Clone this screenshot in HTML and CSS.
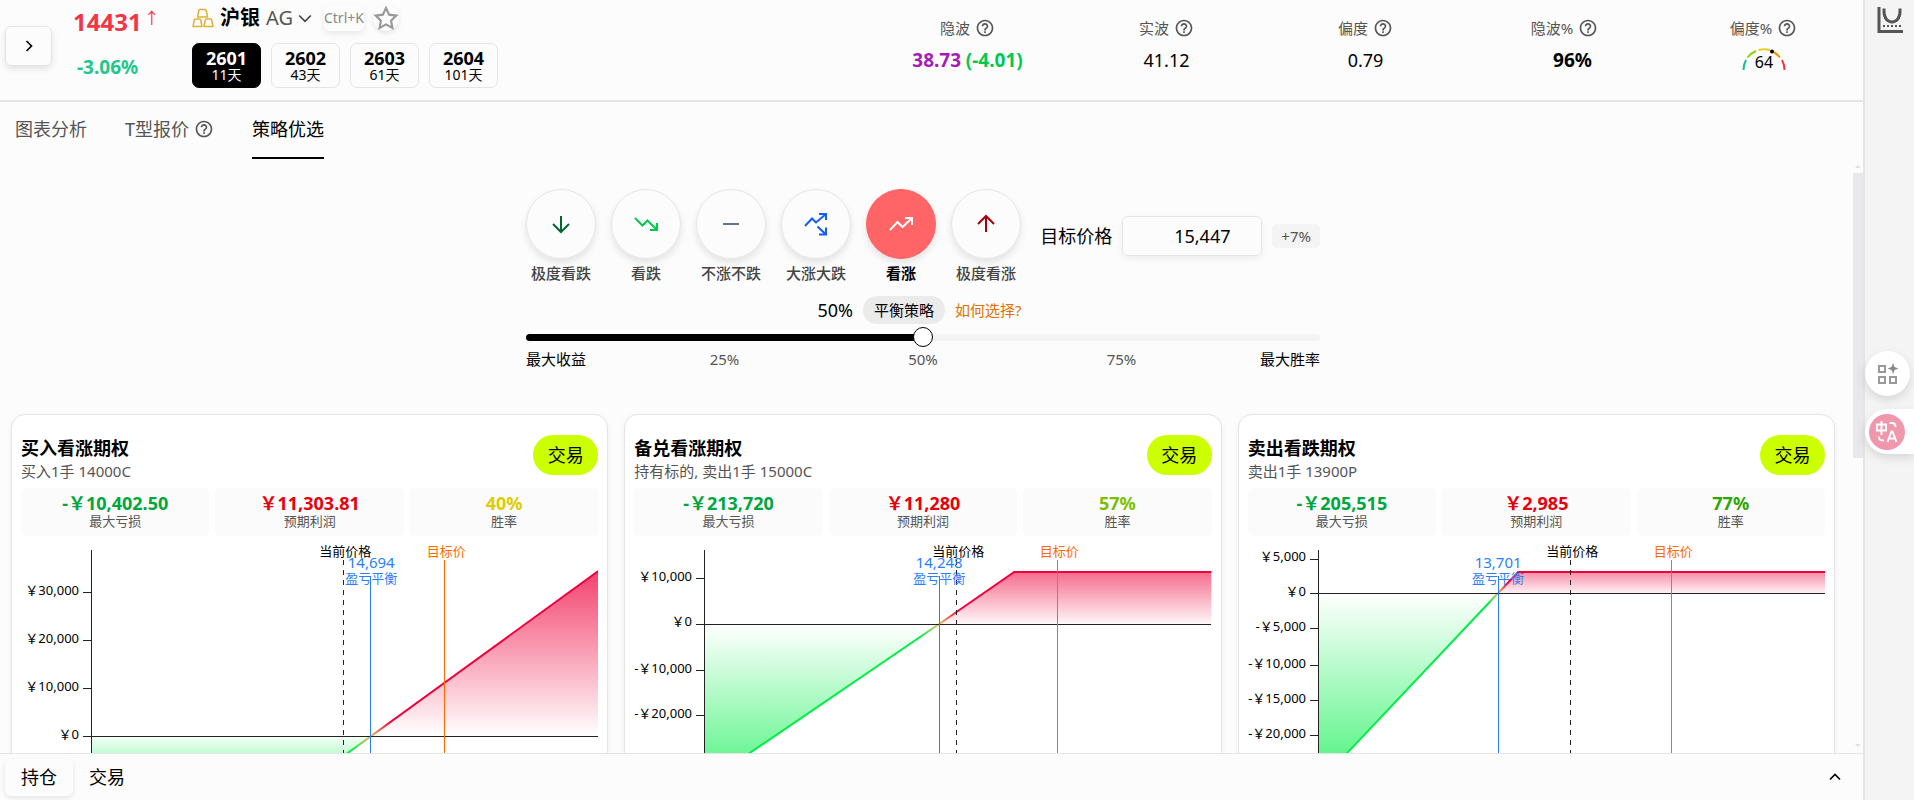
FILE: index.html
```html
<!DOCTYPE html>
<html lang="zh-CN">

<head>
    <meta charset="UTF-8">
    <title>沪银 AG - 策略优选</title>
    <link rel="stylesheet" href="styles.css">
</head>

<body>
    <svg width="0" height="0" class="defs">
        <defs>
            <symbol id="help" viewBox="0 0 24 24">
                <path fill="currentColor" d="M11 18h2v-2h-2v2zm1-16C6.480 2 2 6.480 2 12s4.480 10 10 10 10-4.480 10-10S17.520 2 12 2zm0 18c-4.410 0-8-3.590-8-8s3.590-8 8-8 8 3.590 8 8-3.590 8-8 8zm0-14c-2.210 0-4 1.790-4 4h2c0-1.100.9-2 2-2s2 .9 2 2c0 2-3 1.750-3 5h2c0-2.250 3-2.500 3-5 0-2.210-1.790-4-4-4z" />
            </symbol>
        </defs>
    </svg>

    <main class="main">
        <header class="header">
            <button class="expand" type="button" aria-label="展开">
                <svg width="20" height="20" viewBox="0 0 24 24" class="line"><path d="M9 6l6 6-6 6" /></svg>
            </button>
            <div class="quote">
                <div class="price">14431<span class="arrow">↑</span></div>
                <div class="change">-3.06%</div>
            </div>
            <div class="symbol">
                <div class="symbol-row">
                    <svg class="gold" width="22" height="20" viewBox="0 0 22 20">
                        <path d="M8 1.500q-1 0-1.200 1l-1.300 6.500h10l-1.300-6.500q-.2-1-1.200-1zM3.500 11q-1 0-1.200 1l-1.300 6.500h9l-1.300-6.500q-.2-1-1.200-1zM14.500 11q-1 0-1.200 1l-1.300 6.500h9l-1.300-6.500q-.2-1-1.200-1z" />
                    </svg>
                    <strong>沪银</strong>
                    <span class="code">AG</span>
                    <svg class="line chevron" width="20" height="20" viewBox="0 0 24 24"><path d="M5 9l7 7 7-7" /></svg>
                    <kbd>Ctrl+K</kbd>
                    <button class="star" type="button" aria-label="收藏">
                        <svg width="26" height="26" viewBox="0 0 24 24"><path d="M12 2.800l2.900 6.100 6.600.9-4.800 4.600 1.200 6.700-5.900-3.200-5.900 3.200 1.200-6.700-4.800-4.600 6.600-.9z" /></svg>
                    </button>
                </div>
                <div class="months">
                    <button class="month active" type="button"><b>2601</b><small>11天</small></button>
                    <button class="month" type="button"><b>2602</b><small>43天</small></button>
                    <button class="month" type="button"><b>2603</b><small>61天</small></button>
                    <button class="month" type="button"><b>2604</b><small>101天</small></button>
                </div>
            </div>
            <div class="metrics">
                <div class="metric">
                    <div class="metric-label">隐波 <svg class="help"><use href="#help" /></svg></div>
                    <div class="metric-value"><b class="purple">38.73</b> <b class="green">(-4.01)</b></div>
                </div>
                <div class="metric">
                    <div class="metric-label">实波 <svg class="help"><use href="#help" /></svg></div>
                    <div class="metric-value">41.12</div>
                </div>
                <div class="metric">
                    <div class="metric-label">偏度 <svg class="help"><use href="#help" /></svg></div>
                    <div class="metric-value">0.79</div>
                </div>
                <div class="metric">
                    <div class="metric-label">隐波% <svg class="help"><use href="#help" /></svg></div>
                    <div class="metric-value rank"><b>96%</b></div>
                </div>
                <div class="metric">
                    <div class="metric-label">偏度% <svg class="help"><use href="#help" /></svg></div>
                    <svg class="gauge" width="46" height="28" viewBox="0 0 46 28">
                        <path stroke="#12c48b" d="M2.500 23A21 21 0 0 1 5 13" />
                        <path stroke="#8fd400" d="M6.500 10.500A21 21 0 0 1 15 4" />
                        <path stroke="#f2cb1d" d="M17.500 3A21 21 0 0 1 29 3.200" />
                        <path stroke="#f39200" d="M32.500 5A21 21 0 0 1 39 10.500" />
                        <path stroke="#f23645" d="M41 13A21 21 0 0 1 43.500 23" />
                        <circle cx="31" cy="4.500" r="2" />
                        <text x="23" y="21">64</text>
                    </svg>
                </div>
            </div>
        </header>

        <nav class="tabs">
            <a href="#">图表分析</a>
            <a href="#">T型报价 <svg class="help"><use href="#help" /></svg></a>
            <a href="#" class="active">策略优选</a>
        </nav>

        <div class="scroll">
            <div class="content">
                <section class="picker">
                    <div class="outlook">
                        <button class="view" type="button">
                            <span class="circle c-down2"><svg class="line" width="24" height="24" viewBox="0 0 24 24"><path d="M12 4v16M4 12l8 8 8-8" /></svg></span>
                            极度看跌
                        </button>
                        <button class="view" type="button">
                            <span class="circle c-down"><svg class="line" width="24" height="24" viewBox="0 0 24 24"><path d="M1 6l7.500 7.500 5-5L23 18M16 18h7v-7" /></svg></span>
                            看跌
                        </button>
                        <button class="view" type="button">
                            <span class="circle c-flat"><svg class="line" width="24" height="24" viewBox="0 0 24 24"><path d="M4 12h16" /></svg></span>
                            不涨不跌
                        </button>
                        <button class="view" type="button">
                            <span class="circle c-both"><svg class="line" width="24" height="24" viewBox="0 0 24 24"><path d="M1 14l7-7.500 4 4L22 2M15 2h7v6M13.500 14.500l8.500 8M15 22.500h7v-7" /></svg></span>
                            大涨大跌
                        </button>
                        <button class="view active" type="button">
                            <span class="circle"><svg class="line" width="24" height="24" viewBox="0 0 24 24"><path d="M1 18l7.500-8 5 5L23 6M16 6h7v7" /></svg></span>
                            看涨
                        </button>
                        <button class="view" type="button">
                            <span class="circle c-up2"><svg class="line" width="24" height="24" viewBox="0 0 24 24"><path d="M12 20V4M4 12l8-8 8 8" /></svg></span>
                            极度看涨
                        </button>
                        <div class="target">
                            <label for="target">目标价格</label>
                            <input id="target" type="text" value="15,447">
                            <span class="badge">+7%</span>
                        </div>
                    </div>

                    <div class="balance">
                        <span class="balance-value">50%</span>
                        <span class="pill">平衡策略</span>
                        <a href="#">如何选择?</a>
                    </div>
                    <input class="slider" type="range" min="0" max="100" value="50" aria-label="平衡策略">
                    <div class="marks">
                        <span class="end">最大收益</span>
                        <span>25%</span>
                        <span>50%</span>
                        <span>75%</span>
                        <span class="end">最大胜率</span>
                    </div>
                </section>

                <section class="cards">
                    <article class="card">
                        <div class="card-head">
                            <div>
                                <h2>买入看涨期权</h2>
                                <p>买入1手 14000C</p>
                            </div>
                            <button class="trade" type="button">交易</button>
                        </div>
                        <div class="stats">
                            <div class="stat loss"><b>-&#65509;10,402.50</b><span>最大亏损</span></div>
                            <div class="stat profit"><b>&#65509;11,303.81</b><span>预期利润</span></div>
                            <div class="stat rate-40"><b>40%</b><span>胜率</span></div>
                        </div>
                        <svg class="chart" viewBox="0 0 577 300">
                            <defs>
                                <linearGradient id="line1" gradientUnits="userSpaceOnUse" x1="330" y1="0" x2="369" y2="0">
                                    <stop offset="0" stop-color="#00ee46" /><stop offset=".5" stop-color="#e6c05a" /><stop offset="1" stop-color="#f0003a" />
                                </linearGradient>
                                <linearGradient id="up1" gradientUnits="userSpaceOnUse" x1="0" y1="31" x2="0" y2="196">
                                    <stop offset="0" stop-color="#f0003a" stop-opacity=".74" /><stop offset="1" stop-color="#f0003a" stop-opacity="0" />
                                </linearGradient>
                                <linearGradient id="down1" gradientUnits="userSpaceOnUse" x1="0" y1="196" x2="0" y2="246">
                                    <stop offset="0" stop-color="#00ee46" stop-opacity=".04" /><stop offset="1" stop-color="#00ee46" stop-opacity=".6" />
                                </linearGradient>
                            </defs>
                            <path fill="url(#up1)" d="M350 196L577 31V196z" />
                            <path fill="url(#down1)" d="M70 196H350L281 246H70z" />
                            <path class="payoff" stroke="url(#line1)" d="M70 246H281L577 31" />
                            <path class="axis" d="M70.500 10V300M62 52.500h8M62 100.500h8M62 148.500h8M62 196.500H577" />
                            <g class="ticks">
                                <text x="58" y="55">&#65509;30,000</text>
                                <text x="58" y="103">&#65509;20,000</text>
                                <text x="58" y="151">&#65509;10,000</text>
                                <text x="58" y="199">&#65509;0</text>
                            </g>
                            <path class="now" d="M322.500 20V300" />
                            <path class="even" d="M349.500 36V300" />
                            <path class="goal" d="M423.500 20V300" />
                            <g class="labels">
                                <text x="324" y="16">当前价格</text>
                                <text class="goal-text" x="425" y="16">目标价</text>
                                <text class="even-text even-number" x="350" y="28">14,694</text>
                                <text class="even-text" x="350" y="43">盈亏平衡</text>
                            </g>
                        </svg>
                    </article>

                    <article class="card">
                        <div class="card-head">
                            <div>
                                <h2>备兑看涨期权</h2>
                                <p>持有标的, 卖出1手 15000C</p>
                            </div>
                            <button class="trade" type="button">交易</button>
                        </div>
                        <div class="stats">
                            <div class="stat loss"><b>-&#65509;213,720</b><span>最大亏损</span></div>
                            <div class="stat profit"><b>&#65509;11,280</b><span>预期利润</span></div>
                            <div class="stat rate-57"><b>57%</b><span>胜率</span></div>
                        </div>
                        <svg class="chart" viewBox="0 0 577 300">
                            <defs>
                                <linearGradient id="line2" gradientUnits="userSpaceOnUse" x1="286" y1="0" x2="324" y2="0">
                                    <stop offset="0" stop-color="#00ee46" /><stop offset=".5" stop-color="#e6c05a" /><stop offset="1" stop-color="#f0003a" />
                                </linearGradient>
                                <linearGradient id="up2" gradientUnits="userSpaceOnUse" x1="0" y1="32" x2="0" y2="84">
                                    <stop offset="0" stop-color="#f0003a" stop-opacity=".58" /><stop offset="1" stop-color="#f0003a" stop-opacity=".03" />
                                </linearGradient>
                                <linearGradient id="down2" gradientUnits="userSpaceOnUse" x1="0" y1="84" x2="0" y2="212">
                                    <stop offset="0" stop-color="#00ee46" stop-opacity="0" /><stop offset="1" stop-color="#00ee46" stop-opacity=".56" />
                                </linearGradient>
                            </defs>
                            <path fill="url(#up2)" d="M305 84L380 32H577V84z" />
                            <path fill="url(#down2)" d="M70 84H305L117 212L70 244z" />
                            <path class="payoff" stroke="url(#line2)" d="M70 244L117 212L305 84L380 32H577" />
                            <path class="axis" d="M70.500 10V300M62 38.500h8M62 84.500H577M62 130.500h8M62 175.500h8" />
                            <g class="ticks">
                                <text x="58" y="41">&#65509;10,000</text>
                                <text x="58" y="86">&#65509;0</text>
                                <text x="58" y="133">-&#65509;10,000</text>
                                <text x="58" y="178">-&#65509;20,000</text>
                            </g>
                            <path class="now" d="M322.500 20V300" />
                            <path class="even" d="M305.500 36V300" />
                            <path class="goal" d="M423.500 20V300" />
                            <g class="labels">
                                <text x="324" y="16">当前价格</text>
                                <text class="goal-text" x="425" y="16">目标价</text>
                                <text class="even-text even-number" x="305" y="28">14,248</text>
                                <text class="even-text" x="305" y="43">盈亏平衡</text>
                            </g>
                        </svg>
                    </article>

                    <article class="card">
                        <div class="card-head">
                            <div>
                                <h2>卖出看跌期权</h2>
                                <p>卖出1手 13900P</p>
                            </div>
                            <button class="trade" type="button">交易</button>
                        </div>
                        <div class="stats">
                            <div class="stat loss"><b>-&#65509;205,515</b><span>最大亏损</span></div>
                            <div class="stat profit"><b>&#65509;2,985</b><span>预期利润</span></div>
                            <div class="stat rate-77"><b>77%</b><span>胜率</span></div>
                        </div>
                        <svg class="chart" viewBox="0 0 577 300">
                            <defs>
                                <linearGradient id="line3" gradientUnits="userSpaceOnUse" x1="240" y1="0" x2="260" y2="0">
                                    <stop offset="0" stop-color="#00ee46" /><stop offset=".5" stop-color="#e6c05a" /><stop offset="1" stop-color="#f0003a" />
                                </linearGradient>
                                <linearGradient id="up3" gradientUnits="userSpaceOnUse" x1="0" y1="32" x2="0" y2="53">
                                    <stop offset="0" stop-color="#f0003a" stop-opacity=".45" /><stop offset="1" stop-color="#f0003a" stop-opacity=".05" />
                                </linearGradient>
                                <linearGradient id="down3" gradientUnits="userSpaceOnUse" x1="0" y1="53" x2="0" y2="212">
                                    <stop offset="0" stop-color="#00ee46" stop-opacity="0" /><stop offset="1" stop-color="#00ee46" stop-opacity=".6" />
                                </linearGradient>
                            </defs>
                            <path fill="url(#up3)" d="M250 53L270 32H577V53z" />
                            <path fill="url(#down3)" d="M70 53H250L100 212L70 244z" />
                            <path class="payoff" stroke="url(#line3)" d="M70 244L100 212L250 53L270 32H577" />
                            <path class="axis" d="M70.500 10V300M62 19.500h8M62 53.500H577M62 88.500h8M62 125.500h8M62 160.500h8M62 195.500h8" />
                            <g class="ticks">
                                <text x="58" y="21">&#65509;5,000</text>
                                <text x="58" y="56">&#65509;0</text>
                                <text x="58" y="91">-&#65509;5,000</text>
                                <text x="58" y="128">-&#65509;10,000</text>
                                <text x="58" y="163">-&#65509;15,000</text>
                                <text x="58" y="198">-&#65509;20,000</text>
                            </g>
                            <path class="now" d="M322.500 20V300" />
                            <path class="even" d="M250.500 36V300" />
                            <path class="goal" d="M423.500 20V300" />
                            <g class="labels">
                                <text x="324" y="16">当前价格</text>
                                <text class="goal-text" x="425" y="16">目标价</text>
                                <text class="even-text even-number" x="250" y="28">13,701</text>
                                <text class="even-text" x="250" y="43">盈亏平衡</text>
                            </g>
                        </svg>
                    </article>
                </section>
            </div>
            <div class="scrollbar">
                <svg width="6" height="3" viewBox="0 0 6 3"><path d="M0 3l3-3 3 3z" /></svg>
                <div class="thumb"></div>
                <svg width="6" height="3" viewBox="0 0 6 3"><path d="M0 0l3 3 3-3z" /></svg>
            </div>
        </div>

        <footer class="dock">
            <button class="dock-tab active" type="button">持仓</button>
            <button class="dock-tab" type="button">交易</button>
            <button class="dock-toggle" type="button" aria-label="展开">
                <svg class="line" width="20" height="20" viewBox="0 0 24 24"><path d="M6 15l6-6 6 6" /></svg>
            </button>
        </footer>
    </main>

    <aside class="side">
        <button class="side-chart" type="button" aria-label="波动率曲线">
            <svg width="26" height="28" viewBox="0 0 26 28">
                <path d="M2 0v24.500h24" />
                <path d="M7 1.500v3c0 14 16 14 16 0v-3" />
                <path stroke-dasharray="2 2" stroke-width="2" d="M6 19h18" />
            </svg>
        </button>
        <div class="floats">
            <button class="float-apps" type="button" aria-label="应用">
                <svg width="22" height="22" viewBox="0 0 22 22">
                    <path class="box" d="M2 3h6v6H2zM2 14h6v6H2zM13 14h6v6h-6z" />
                    <path class="spark" d="M16 0l1.500 4 4 1.500-4 1.500-1.500 4-1.500-4-4-1.500 4-1.500z" />
                </svg>
            </button>
            <button class="float-translate" type="button" aria-label="翻译">
                <svg width="36" height="36" viewBox="0 0 36 36">
                    <circle cx="18" cy="18" r="18" />
                    <path d="M8 10.500h9v6H8zM12.500 7v14M20.500 9h2.500q3.500 0 3.500 4M10 22.500v1q0 3 5 3M18.500 28l4-10.500h1l4 10.500M20 24.500h6" />
                </svg>
            </button>
        </div>
    </aside>
</body>

</html>
```

FILE: styles.css
```css
* {
    box-sizing: border-box;
}

body {
    display: flex;
    height: 100vh;
    margin: 0;
    overflow: hidden;
    background-color: #fcfcfc;
    color: #000;
    font-family: "Noto Sans", "Noto Sans CJK SC", sans-serif;
    font-size: 18px;
    line-height: 24px;
}

button,
input {
    padding: 0;
    border: 0;
    background: none;
    color: inherit;
    font: inherit;
}

button {
    cursor: pointer;
}

a {
    color: inherit;
    text-decoration: none;
}

.defs {
    position: absolute;
}

.line {
    fill: none;
    stroke: currentColor;
    stroke-width: 2;
}

.help {
    width: 20px;
    height: 20px;
    color: #555;
}

.main {
    display: flex;
    flex: 1;
    flex-direction: column;
    min-width: 0;
    border-right: 2px solid #e5e5e5;
}

/* header */
.header {
    display: flex;
    flex: none;
    height: 102px;
    padding-left: 5px;
    border-bottom: 2px solid #e5e5e5;
}

.expand {
    display: flex;
    align-items: center;
    justify-content: center;
    width: 47px;
    height: 40px;
    margin-top: 26px;
    border: 1px solid #e5e5e5;
    border-radius: 6px;
    box-shadow: 0 3px 6px rgba(0, 0, 0, .1);
}

.quote {
    width: 140px;
    padding: 8px 0 0 21px;
}

.price {
    color: #f23645;
    font-size: 24px;
    font-weight: bold;
    line-height: 28px;
    white-space: nowrap;
}

.arrow {
    margin-left: 2px;
    font-size: 16px;
    font-weight: normal;
    vertical-align: 7px;
    line-height: 1;
}

.change {
    margin-top: 19px;
    padding-left: 4px;
    color: #1ec88a;
    font-size: 19px;
    font-weight: bold;
}

.symbol-row {
    display: flex;
    align-items: center;
    height: 36px;
    font-size: 20px;
}

.symbol-row strong {
    margin: 0 6px;
}

.gold {
    fill: none;
    stroke: #dfb236;
    stroke-width: 1.5;
    stroke-linejoin: round;
}

.code {
    color: #555;
}

.chevron {
    margin: 0 9px 0 2px;
    color: #444;
}

kbd {
    height: 26px;
    border-radius: 6px;
    box-shadow: 0 3px 6px rgba(0, 0, 0, .08);
    color: #888;
    font-family: inherit;
    font-size: 14px;
    line-height: 26px;
}

.star {
    display: flex;
    width: 26px;
    height: 26px;
    margin-left: 9px;
    border-radius: 50%;
    box-shadow: 0 2px 5px rgba(0, 0, 0, .1);
}

.star path {
    fill: none;
    stroke: #999;
    stroke-width: 2;
}

.months {
    display: flex;
    gap: 10px;
    margin-top: 7px;
}

.month {
    display: flex;
    flex-direction: column;
    align-items: center;
    justify-content: center;
    width: 69px;
    height: 45px;
    border: 1px solid #e5e5e5;
    border-radius: 7px;
}

.month b {
    line-height: 17px;
}

.month small {
    font-size: 14px;
    line-height: 15px;
}

.month.active {
    border-color: #000;
    background-color: #000;
    color: #fff;
}

.metrics {
    display: flex;
    width: 995px;
    margin-left: auto;
}

.metric {
    display: flex;
    flex: 1;
    flex-direction: column;
    align-items: center;
    padding-top: 16px;
}

.metric-label {
    display: flex;
    align-items: center;
    gap: 5px;
    color: #555;
    font-size: 15px;
}

.metric-value {
    margin-top: 8px;
}

.metric-value b {
    font-size: 19px;
}

.rank {
    padding-left: 16px;
}

.purple {
    color: #a61bb5;
}

.green {
    color: #00c950;
}

.gauge {
    margin-top: 7px;
    fill: none;
    stroke-width: 2;
}

.gauge circle,
.gauge text {
    fill: #000;
}

.gauge text {
    font-size: 16px;
    text-anchor: middle;
}

/* tabs */
.tabs {
    display: flex;
    flex: none;
    gap: 38px;
    height: 60px;
    padding-left: 15px;
    color: #555;
}

.tabs a {
    display: flex;
    align-items: center;
    gap: 5px;
    height: 57px;
    padding-bottom: 2px;
    border-bottom: 2px solid transparent;
}

.tabs .active {
    border-color: #000;
    color: #000;
}

.scroll {
    display: flex;
    flex: 1;
    min-height: 0;
    overflow: hidden;
}

.content {
    flex: 1;
    padding: 27px 18px 0 11px;
}

.scrollbar {
    display: flex;
    flex-direction: column;
    align-items: center;
    width: 10px;
    padding: 3px 0 6px;
    fill: #e0e0e4;
}

.thumb {
    width: 100%;
    height: 49%;
    margin: 5px 0 auto;
    background-color: #e7e7ec;
}

/* picker */
.picker {
    width: 794px;
    margin: 0 auto;
}

.outlook {
    display: flex;
    gap: 15px;
}

.view {
    display: flex;
    flex-direction: column;
    align-items: center;
    gap: 2px;
    width: 70px;
    color: #444;
    font-size: 15px;
    font-weight: 500;
    white-space: nowrap;
}

.circle {
    display: flex;
    align-items: center;
    justify-content: center;
    width: 70px;
    height: 70px;
    border: 1px solid #e5e5e5;
    border-radius: 50%;
    box-shadow: 0 4px 7px rgba(0, 0, 0, .1);
}

.c-down2 {
    color: #016630;
}

.c-down {
    color: #00c950;
}

.c-flat {
    color: #62748e;
}

.c-both {
    color: #155dfc;
}

.c-up2 {
    color: #a50010;
}

.view.active {
    color: #000;
    font-weight: bold;
}

.active .circle {
    border-color: #ff6467;
    background-color: #ff6467;
    color: #fff;
}

.target {
    display: flex;
    flex: 1;
    align-items: center;
    justify-content: flex-end;
    gap: 10px;
    height: 94px;
    white-space: nowrap;
}

.target input {
    width: 140px;
    height: 40px;
    padding-left: 20px;
    border: 1px solid #e5e5e5;
    border-radius: 6px;
    box-shadow: 0 3px 6px rgba(0, 0, 0, .06);
    text-align: center;
}

.badge {
    padding: 0 9px;
    border-radius: 5px;
    background-color: #f4f4f4;
    color: #555;
    font-size: 15px;
}

.balance {
    display: flex;
    align-items: center;
    justify-content: center;
    gap: 10px;
    height: 28px;
    margin-top: 11px;
    padding-right: 7px;
    font-size: 15px;
}

.balance-value {
    font-size: 18px;
}

.pill {
    padding: 2px 11px;
    border-radius: 14px;
    background-color: #ebebeb;
}

.balance a {
    color: #e17100;
}

.slider {
    display: block;
    width: 100%;
    height: 20px;
    margin: 3px 0 0;
    appearance: none;
}

.slider::-webkit-slider-runnable-track {
    height: 7px;
    border-radius: 4px;
    background: linear-gradient(to right, #000 50%, #f4f4f4 50%);
}

.slider::-webkit-slider-thumb {
    width: 20px;
    height: 20px;
    margin-top: -7px;
    border: 1px solid #000;
    border-radius: 50%;
    background-color: #fff;
    appearance: none;
}

.marks {
    display: grid;
    grid-template-columns: 1fr 2fr 2fr 2fr 1fr;
    color: #555;
    font-size: 15px;
    text-align: center;
}

.marks .end {
    color: #000;
    text-align: left;
}

.marks .end:last-child {
    text-align: right;
}

/* cards */
.cards {
    display: grid;
    grid-template-columns: repeat(3, 1fr);
    gap: 16px;
    margin-top: 43px;
}

.card {
    padding: 20px 9px 9px;
    border: 1px solid #e5e5e5;
    border-radius: 14px;
    background-color: #fff;
    box-shadow: 0 1px 5px rgba(0, 0, 0, .06);
}

.card-head {
    display: flex;
    justify-content: space-between;
}

.card h2,
.card p {
    margin: 0;
}

.card h2 {
    font-size: 18px;
    line-height: 26px;
}

.card p {
    color: #555;
    font-size: 15px;
    line-height: 21px;
}

.trade {
    width: 65px;
    height: 40px;
    border-radius: 20px;
    background-color: #cf0;
}

.stats {
    display: grid;
    grid-template-columns: repeat(3, 1fr);
    gap: 6px;
    margin-top: 6px;
}

.stat {
    display: flex;
    flex-direction: column;
    align-items: center;
    height: 48px;
    padding-top: 6px;
    border-radius: 5px;
    background-color: #fbfbfb;
}

.stat b {
    line-height: 19px;
}

.stat span {
    color: #555;
    font-size: 13px;
    line-height: 17px;
}

.loss b {
    color: #00a63e;
}

.profit b {
    color: #e7000b;
}

.rate-40 b {
    color: #e0cb00;
}

.rate-57 b {
    color: #7abf00;
}

.rate-77 b {
    color: #2ba600;
}

.chart {
    display: block;
    width: 100%;
    margin-top: 4px;
    font-size: 13px;
}

.chart .payoff {
    fill: none;
    stroke-width: 2;
}

.axis,
.now,
.even,
.goal {
    fill: none;
    shape-rendering: crispEdges;
}

.axis {
    stroke: #222;
}

.now {
    stroke: #222;
    stroke-dasharray: 5 5;
}

.even {
    stroke: #2b7fff;
}

.goal {
    stroke: #ff6900;
}

.ticks {
    text-anchor: end;
}

.labels {
    text-anchor: middle;
}

.goal-text {
    fill: #ff6900;
}

.even-text {
    fill: #2b7fff;
}

.even-number {
    font-size: 15px;
}

/* bottom dock */
.dock {
    display: flex;
    flex: none;
    align-items: center;
    height: 47px;
    padding: 0 18px 0 5px;
    border-top: 1px solid #e5e5e5;
}

.dock-tab {
    height: 37px;
    padding: 0 16px;
    border-radius: 6px;
}

.dock-tab.active {
    box-shadow: 0 2px 5px rgba(0, 0, 0, .1);
}

.dock-toggle {
    display: flex;
    margin-left: auto;
}

/* right side */
.side {
    display: flex;
    flex: none;
    flex-direction: column;
    width: 49px;
    background-color: #f4f4f4;
}

.side-chart {
    display: flex;
    margin: 7px 0 0 12px;
    fill: none;
    stroke: #555;
    stroke-width: 3;
}

.floats {
    display: flex;
    flex-direction: column;
    gap: 13px;
    margin-top: 316px;
}

.float-apps,
.float-translate {
    display: flex;
    align-items: center;
    justify-content: center;
    width: 45px;
    height: 45px;
    border-radius: 50%;
    background-color: #fff;
    box-shadow: 0 4px 10px rgba(0, 0, 0, .12);
}

.float-translate {
    width: 49px;
    padding-right: 5px;
    border-radius: 23px 0 0 23px;
}

.box {
    fill: none;
    stroke: #999;
    stroke-width: 2;
}

.spark {
    fill: #888;
}

.float-translate circle {
    fill: #f096ad;
}

.float-translate path {
    fill: none;
    stroke: #fff;
    stroke-width: 2;
}
```
